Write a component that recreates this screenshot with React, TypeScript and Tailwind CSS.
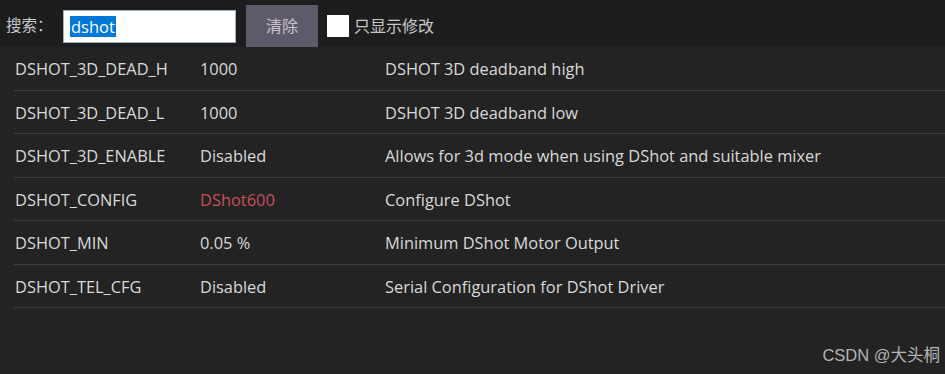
const PARAMS = [
  { name: "DSHOT_3D_DEAD_H", value: "1000", desc: "DSHOT 3D deadband high" },
  { name: "DSHOT_3D_DEAD_L", value: "1000", desc: "DSHOT 3D deadband low" },
  { name: "DSHOT_3D_ENABLE", value: "Disabled", desc: "Allows for 3d mode when using DShot and suitable mixer" },
  { name: "DSHOT_CONFIG", value: "DShot600", desc: "Configure DShot", changed: true },
  { name: "DSHOT_MIN", value: "0.05 %", desc: "Minimum DShot Motor Output" },
  { name: "DSHOT_TEL_CFG", value: "Disabled", desc: "Serial Configuration for DShot Driver" },
];

export default function App() {
  return (
    <div
      className="flex h-[374px] w-[945px] flex-col overflow-hidden bg-[#232323] text-[16.4px] text-[#d9d9d9]"
      style={{ fontFamily: '"Open Sans", "Noto Sans CJK SC", sans-serif' }}
    >
      <div className="flex h-[47px] shrink-0 items-center bg-[#1d1d1d] pl-[6px] pt-[5px]">
        <span className="w-[57px] text-[15.5px] text-[#c8c8c8]">搜索：</span>
        <div className="flex h-[33px] w-[173px] items-center border border-[#9fb0c0] bg-white pl-[6px]">
          <span className="bg-[#0078d7] px-[1px] text-[16.5px] leading-[21px] text-white">dshot</span>
        </div>
        <button className="ml-[10px] h-[42px] w-[72px] bg-[#5f5a6a] text-[16px] text-[#c4c4c8]">清除</button>
        <div className="ml-[9px] h-[22px] w-[22px] bg-white" />
        <span className="ml-[5px] text-[16px] text-[#c8c8c8]">只显示修改</span>
      </div>
      <div className="ml-[14px] flex flex-col">
        {PARAMS.map((p) => (
          <div key={p.name} className="flex h-[43.5px] items-center border-b border-[#3c3c3c] pl-[1px] pt-[3px]">
            <span className="w-[185px]">{p.name}</span>
            <span className={`w-[185px] ${p.changed ? "text-[#c4505c]" : ""}`}>{p.value}</span>
            <span>{p.desc}</span>
          </div>
        ))}
      </div>
      <div className="mt-auto mb-[6px] pr-[5px] text-right text-[16.5px] text-[#b4b4b4]" style={{ fontFamily: '"Liberation Sans", "Noto Sans CJK SC", sans-serif' }}>
        CSDN @大头桐
      </div>
    </div>
  );
}
